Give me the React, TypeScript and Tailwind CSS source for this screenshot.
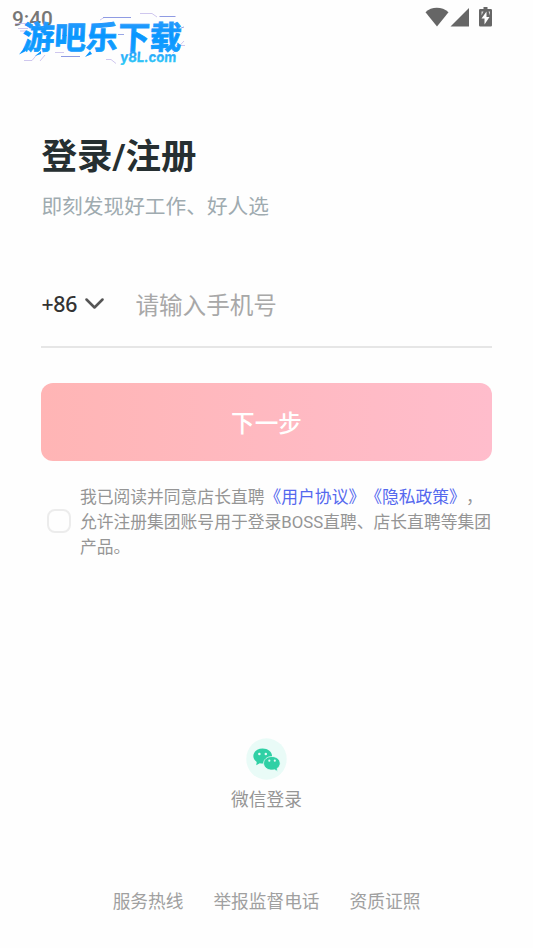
import React, { useState } from "react";

const footerLinks = ["服务热线", "举报监督电话", "资质证照"];

const Watermark: React.FC = () => {
  return (
    <svg className="absolute left-0 top-0 select-none" width="200" height="75" viewBox="0 0 200 75" fill="none">
      <defs>
        <linearGradient id="wm" x1="0" y1="0" x2="0" y2="1">
          <stop offset="0" stopColor="#3d9dfa" />
          <stop offset="0.5" stopColor="#0896ff" />
          <stop offset="1" stopColor="#18a0ff" />
        </linearGradient>
        <linearGradient id="wm2" x1="0" y1="0" x2="0" y2="1">
          <stop offset="0" stopColor="#1e90ff" />
          <stop offset="1" stopColor="#32cdf5" />
        </linearGradient>
      </defs>
      {/* circuit lines around the logo */}
      <g stroke="#c3b9ea" strokeWidth="0.8">
        <path d="M15 23.500h12M18 28.500h10M20 31h6M100 20l4-2.500h27M140 13.500h12l5 3.500M159 16.500h17" />
        <path d="M61 56.500h19M55 52.500h9M24 60.500h8l5-6M40 61l5-6M106 59.500h5l5 4" />
        <path d="M173 53l11-12M176 45.500h9" />
      </g>
      <g stroke="#7f8fe0" strokeWidth="0.8">
        <path d="M118 34.500h6M62 35.500h5M103 17.500h28M61 56.500h19M160 16.500h15M181 28l3-1" />
      </g>
      <g
        fill="url(#wm)"
        stroke="url(#wm)"
        strokeWidth="0.8"
        className="font-['Noto_Sans_CJK_SC',sans-serif] font-bold text-[32px]"
      >
        <text transform="translate(22 49) skewX(-3)" textLength="159" lengthAdjust="spacingAndGlyphs">
          游吧乐下载
        </text>
      </g>
      <path d="M25 47l-6 7.500 6-3zM90 51l-5 6 7-3zM41 51l-6 5 6-2z" fill="#0896ff" />
      <text
        transform="translate(120 61.500) skewX(-4)"
        textLength="56"
        lengthAdjust="spacingAndGlyphs"
        fill="url(#wm2)"
        stroke="url(#wm2)"
        strokeWidth="0.3"
        className="font-['Inter',sans-serif] font-bold text-[14px]"
      >
        y8L.com
      </text>
    </svg>
  );
};

const StatusBar: React.FC = () => {
  return (
    <div className="relative flex h-9 items-start justify-between pl-3 pr-10">
      <span className="pt-[7px] font-['Roboto',sans-serif] text-[20.800px] leading-6 font-medium text-[#777777]">
        9:40
      </span>
      <svg className="mt-[7px]" width="68" height="20" viewBox="0 0 68 20" fill="#666666">
        <path d="M0.500 5.200C6.500-0.600 17-0.600 23.500 5.200L12 19.500Z" />
        <path d="M44 1V19.500H25.500Z" />
        <path
          fillRule="evenodd"
          d="M58.500 0h4v2h3.200q1.300 0 1.300 1.300v15q0 1.200-1.300 1.200h-10.400q-1.300 0-1.300-1.200v-15Q54 2 55.300 2h3.200zM61.500 4.500l-5 7h3v6l5-7.500h-3z"
        />
        <path d="M56.500 4.500h2l-2 4zM65 4.500v4l-1.500-4z" fill="#d8d8d8" />
      </svg>
      <Watermark />
    </div>
  );
};

const WechatIcon: React.FC = () => {
  return (
    <svg width="41" height="42" viewBox="0 0 42 42" preserveAspectRatio="none">
      <circle cx="21" cy="21" r="20.700" fill="#e9fbf7" />
      <path
        d="M17 10.500c-5.400 0-9.500 3.300-9.500 7.500 0 2.400 1.400 4.500 3.500 5.900l-.5 3.300 3.600-1.900c1 .2 1.900.3 2.900.3 5.400 0 9.700-3.300 9.700-7.600S22.400 10.500 17 10.500z"
        fill="#2fd0a5"
      />
      <path
        d="M26.500 18.500c-4.700 0-8.500 3-8.500 6.800s3.800 6.800 8.500 6.800c.9 0 1.800-.1 2.600-.4l3.400 1.700-.6-2.900c1.900-1.200 3.100-3.100 3.100-5.200 0-3.800-3.800-6.800-8.500-6.800z"
        fill="#2fd0a5"
        stroke="#e9fbf7"
        strokeWidth="0.8"
      />
      <g fill="#e9fbf7">
        <circle cx="13.700" cy="16" r="1.300" />
        <circle cx="20.300" cy="16" r="1.300" />
        <circle cx="23.900" cy="22.700" r="1.100" />
        <circle cx="29.500" cy="22.700" r="1.100" />
      </g>
    </svg>
  );
};

export default function App() {
  const [phone, setPhone] = useState("");
  const [agreed, setAgreed] = useState(false);

  return (
    <div className="flex h-[948px] w-[533px] flex-col overflow-hidden bg-[#fefefe] font-['Roboto','Noto_Sans_CJK_SC',sans-serif] [text-spacing-trim:space-all]">
      <StatusBar />

      <main className="flex flex-col px-[41.400px] pt-[97px]">
        <h1 className="text-[35.500px] leading-12 font-bold text-[#262f31]">登录/注册</h1>
        <p className="mt-2.5 text-[20.700px] leading-8 text-[#9fabb0]">即刻发现好工作、好人选</p>

        <div className="mt-10 flex h-[85px] items-center border-b-2 border-[#e6e6e6]">
          <button className="flex items-center gap-[7px] pb-0.5 text-[#333333]">
            <span className="w-[37px] text-left font-['Noto_Sans',sans-serif] text-[21.300px] leading-8 font-medium tracking-[-0.200px] whitespace-nowrap">
              +86
            </span>
            <svg width="19" height="12" viewBox="0 0 19 12" fill="none" stroke="#555555" strokeWidth="2.500">
              <path d="M1.500 1.500L9.500 9.500L17.500 1.500" strokeLinecap="round" strokeLinejoin="round" />
            </svg>
          </button>
          <input
            value={phone}
            onChange={(e) => setPhone(e.target.value)}
            placeholder="请输入手机号"
            className="ml-[31px] mt-0.5 h-10 w-80 text-[23.600px] text-[#333333] outline-none placeholder:text-[#a8a8a8]"
          />
        </div>

        <button className="mt-[35px] h-[78px] rounded-xl bg-linear-to-r from-[#ffb5b5] to-[#ffbdcc] pt-1.5 text-[23.600px] font-medium text-white">
          下一步
        </button>

        <div className="mt-[23.500px] flex items-center">
          <button
            onClick={() => setAgreed(!agreed)}
            className={`mb-[3px] ml-[5.500px] h-6 w-6 shrink-0 rounded-lg border-2 border-[#ececec] ${agreed ? "bg-[#ffb5b5]" : "bg-[#fefefe]"}`}
          />
          <div className="ml-[9px] text-[16.800px] leading-[25px] whitespace-nowrap text-[#959595]">
            <p>
              我已阅读并同意店长直聘<span className="text-[#5468ee]">《用户协议》《隐私政策》</span>，
            </p>
            <p>允许注册集团账号用于登录BOSS直聘、店长直聘等集团</p>
            <p>产品。</p>
          </div>
        </div>
      </main>

      <div className="mt-[178.500px] flex flex-col items-center">
        <WechatIcon />
        <span className="mt-2 text-[17.700px] leading-6 text-[#959595]">微信登录</span>
      </div>

      <footer className="mt-[78px] flex justify-center gap-[30px] text-[17.700px] leading-6 text-[#a0a0a0]">
        {footerLinks.map((link) => (
          <span key={link}>{link}</span>
        ))}
      </footer>
    </div>
  );
}
